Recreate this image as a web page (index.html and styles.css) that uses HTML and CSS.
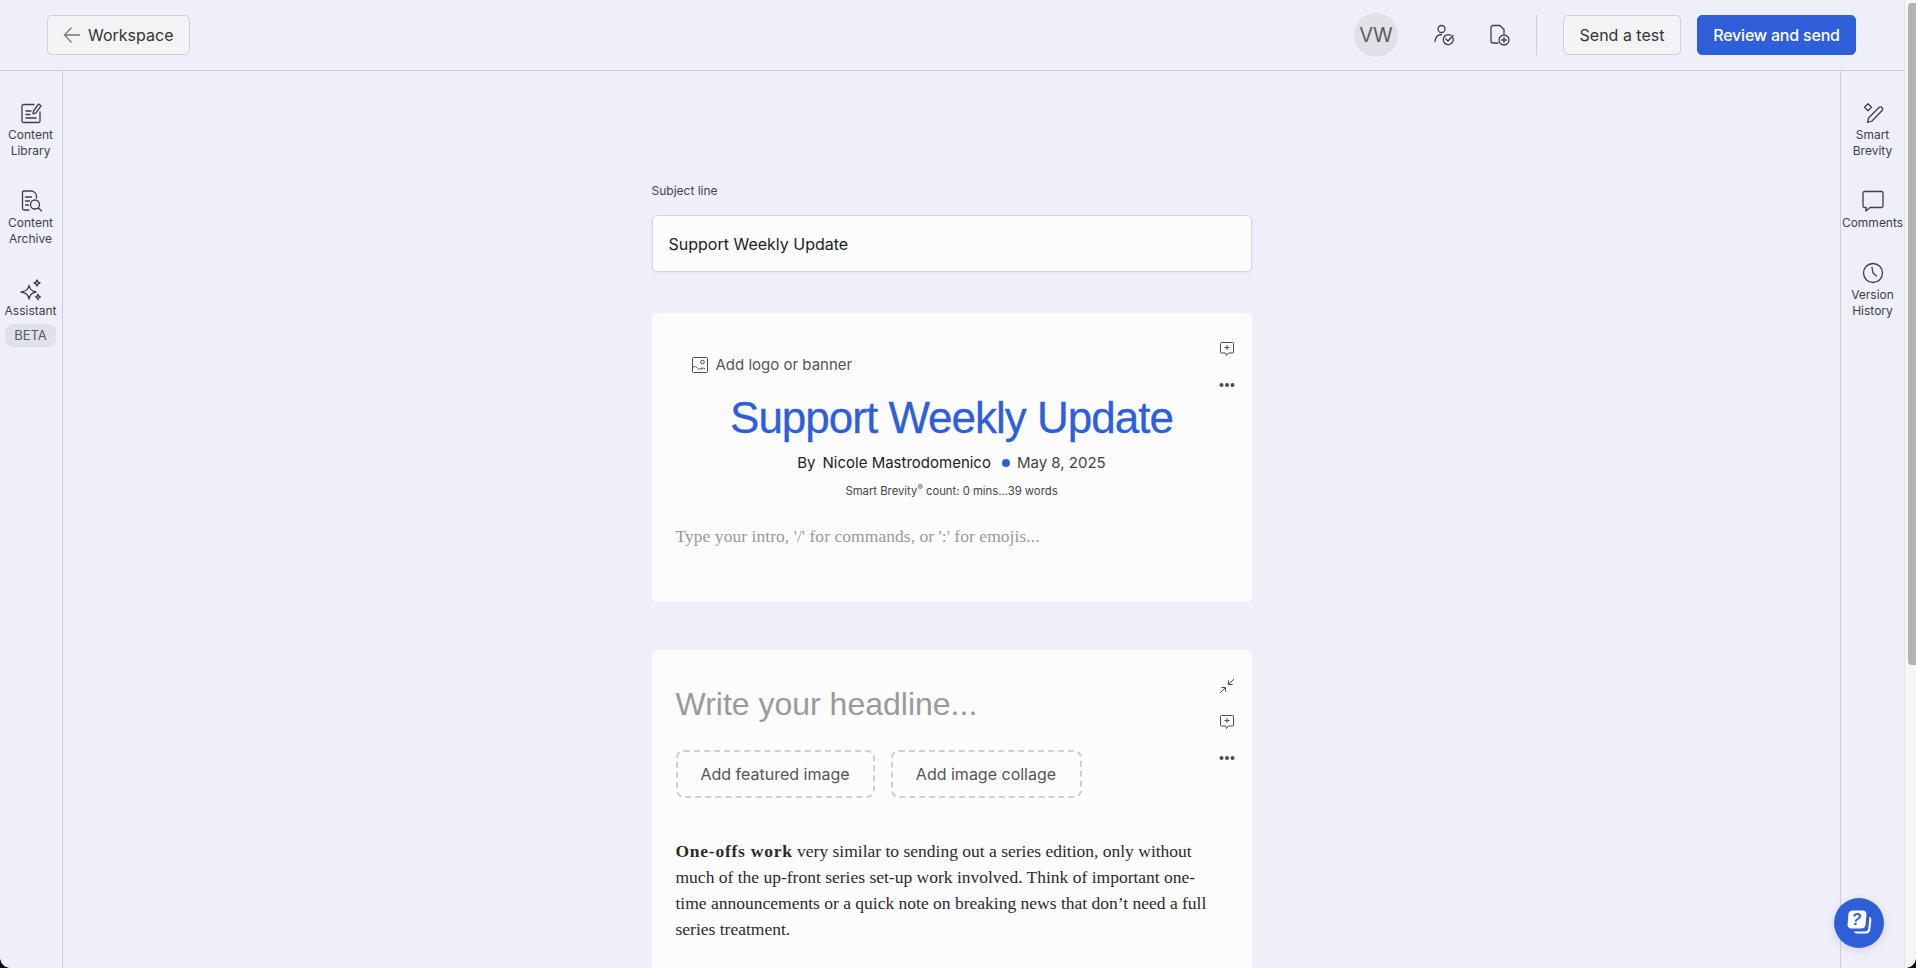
FILE: index.html
```html
<!DOCTYPE html>
<html lang="en">
<head>
    <meta charset="UTF-8">
    <meta name="viewport" content="width=device-width, initial-scale=1.0">
    <title>Support Weekly Update</title>
    <link rel="stylesheet" href="styles.css">
</head>
<body>
    <div class="window">
        <div class="page">
            <header class="topbar">
                <button class="btn btn-back">
                    <svg class="back-arrow" width="18" height="18" viewBox="0 0 18 18"><path d="M17 9H1.500M8.500 1.500 1.500 9l7 7.500"/></svg>
                    Workspace
                </button>
                <div class="topbar-right">
                    <div class="avatar">VW</div>
                    <button class="icon-btn icon-approvals" aria-label="Approvals">
                        <svg class="icon" width="24" height="24" viewBox="0 0 24 24"><circle cx="9.500" cy="6" r="3.500"/><path d="M3 18.500c.5-4 3-7 6.500-7"/><path d="M20.800 14.500a5 5 0 1 1-2-2.200"/><path d="m13.800 16 2.200 2 5-5.500"/></svg>
                    </button>
                    <button class="icon-btn" aria-label="Add document">
                        <svg class="icon" width="24" height="24" viewBox="0 0 24 24"><path d="M11 20H6a2 2 0 0 1-2-2V4.500a2 2 0 0 1 2-2h7l4 4v4"/><circle cx="17" cy="17" r="5"/><path d="M17 14.500v5M14.500 17h5"/></svg>
                    </button>
                    <div class="divider"></div>
                    <button class="btn btn-test">Send a test</button>
                    <button class="btn btn-primary">Review and send</button>
                </div>
            </header>

            <div class="workspace">
                <nav class="rail rail-left">
                    <a class="rail-item">
                        <svg class="icon" width="24" height="24" viewBox="0 0 24 24"><path d="M15 3.500H4.500A1.500 1.500 0 0 0 3 5v15a1.500 1.500 0 0 0 1.500 1.500h15A1.500 1.500 0 0 0 21 20v-9"/><path d="M7 10h5M7 13.500h4M7 17h10"/><path d="m14.500 10 5-7 2.500 1.800-5 7-3 1z"/></svg>
                        <span>Content<br>Library</span>
                    </a>
                    <a class="rail-item">
                        <svg class="icon" width="24" height="24" viewBox="0 0 24 24"><path d="M10 21H5a1.500 1.500 0 0 1-1.500-1.500V3.500A1.500 1.500 0 0 1 5 2h7c3 0 5.500 2.500 5.500 5.500V9"/><path d="M6.500 8h6M6.500 12h4M6.500 16h3"/><circle cx="16" cy="15.500" r="4.500"/><path d="m19.500 19 3 3"/></svg>
                        <span>Content<br>Archive</span>
                    </a>
                    <a class="rail-item item-assistant">
                        <svg class="icon" width="24" height="24" viewBox="0 0 24 24"><path d="M10 6.500c1 4 2.500 5.500 7 6.500-4.500 1-6 2.500-7 7-1-4.500-2.500-6-8-7 5.500-1 7-2.500 8-6.500z"/><path d="M18 1c.4 2 1 2.600 3 3-2 .4-2.600 1-3 3-.4-2-1-2.600-3-3 2-.4 2.600-1 3-3zM19 15.500c.3 1.500.8 2 2.500 2.500-1.700.5-2.200 1-2.500 2.500-.3-1.500-.8-2-2.500-2.500 1.700-.5 2.200-1 2.500-2.500z"/></svg>
                        <span>Assistant</span>
                        <span class="beta">BETA</span>
                    </a>
                </nav>

                <main class="editor">
                    <label class="subject-label">Subject line</label>
                    <div class="subject-input">Support Weekly Update</div>

                    <section class="card card-header">
                        <div class="card-tools">
                            <svg class="tool" width="16" height="16" viewBox="0 0 16 16"><path d="M2.500 1.500h11a1 1 0 0 1 1 1v8.500a1 1 0 0 1-1 1H9.500L7.500 14.500 6.500 12h-4a1 1 0 0 1-1-1V2.500a1 1 0 0 1 1-1z"/><path d="M8 4v5M5.500 6.500h5"/></svg>
                            <svg class="dots" width="16" height="16" viewBox="0 0 16 16"><circle cx="2.500" cy="8" r="2"/><circle cx="8" cy="8" r="2"/><circle cx="13.500" cy="8" r="2"/></svg>
                        </div>
                        <div class="add-logo">
                            <svg class="tool" width="18" height="18" viewBox="0 0 18 18"><rect x="1.500" y="1.500" width="15" height="15" rx="1"/><circle cx="11.500" cy="6" r="1.800"/><path d="M1.500 12c2-2 3.500-2 5 0s3 1 4.500-.5M10 13.500l2.500-1.500 1.500 1"/></svg>
                            Add logo or banner
                        </div>
                        <h1 class="title">Support Weekly Update</h1>
                        <div class="byline">
                            <span class="by">By</span>
                            <span class="author">Nicole Mastrodomenico</span>
                            <span class="dot"></span>
                            <span class="date">May 8, 2025</span>
                        </div>
                        <div class="count">Smart Brevity<sup>®</sup> count: 0 mins...39 words</div>
                        <div class="intro">Type your intro, '/' for commands, or ':' for emojis...</div>
                    </section>

                    <section class="card card-story">
                        <div class="card-tools">
                            <svg class="tool" width="16" height="16" viewBox="0 0 16 16"><path d="M9.500 6.500 15 1M9.500 2.500v4h4M6.500 9.500 1 15M2.500 9.500h4v4"/></svg>
                            <svg class="tool" width="16" height="16" viewBox="0 0 16 16"><path d="M2.500 1.500h11a1 1 0 0 1 1 1v8.500a1 1 0 0 1-1 1H9.500L7.500 14.500 6.500 12h-4a1 1 0 0 1-1-1V2.500a1 1 0 0 1 1-1z"/><path d="M8 4v5M5.500 6.500h5"/></svg>
                            <svg class="dots" width="16" height="16" viewBox="0 0 16 16"><circle cx="2.500" cy="8" r="2"/><circle cx="8" cy="8" r="2"/><circle cx="13.500" cy="8" r="2"/></svg>
                        </div>
                        <div class="headline">Write your headline...</div>
                        <div class="image-btns">
                            <button class="dashed dashed-featured">Add featured image</button>
                            <button class="dashed dashed-collage">Add image collage</button>
                        </div>
                        <p class="story"><strong>One-offs work</strong> very similar to sending out a series edition, only without<br>much of the up-front series set-up work involved. Think of important one-<br>time announcements or a quick note on breaking news that don’t need a full<br>series treatment.</p>
                    </section>
                </main>

                <nav class="rail rail-right">
                    <a class="rail-item">
                        <svg class="icon" width="24" height="24" viewBox="0 0 24 24"><path d="M6.500 21.500 7.500 17 18 6.500a2.200 2.200 0 0 1 3.200 3L11 20z"/><path d="M7 2.800 10.500 6.300 7 9.800 3.500 6.300z"/></svg>
                        <span>Smart<br>Brevity</span>
                    </a>
                    <a class="rail-item">
                        <svg class="icon" width="24" height="24" viewBox="0 0 24 24"><path d="M3.500 2.500h17a1.500 1.500 0 0 1 1.500 1.500v13a1.500 1.500 0 0 1-1.500 1.500H9L5 22v-3.500H3.500A1.500 1.500 0 0 1 2 17V4a1.500 1.500 0 0 1 1.500-1.500z"/></svg>
                        <span>Comments</span>
                    </a>
                    <a class="rail-item">
                        <svg class="icon" width="24" height="24" viewBox="0 0 24 24"><circle cx="12" cy="12" r="9.500"/><path d="M11 6.500 12 12l3.500 3"/></svg>
                        <span>Version<br>History</span>
                    </a>
                </nav>
            </div>
        </div>

        <div class="scrollbar"><div class="thumb"></div></div>

        <button class="help" aria-label="Help">
            <svg width="30" height="30" viewBox="0 0 30 30">
                <path class="help-back" d="M25.500 8.500c1.500 1 2 2 1.800 4l-1 9c-.3 2.500-2 4-4.500 4h-9c-1.500 0-2.500-.8-3-2h11c2 0 3.300-1 3.600-3z"/>
                <rect class="help-front" x="3.500" y="2.500" width="18" height="18" rx="4" transform="skewX(-5) translate(1.500 0)"/>
                <text class="help-mark" x="12.500" y="17" text-anchor="middle">?</text>
            </svg>
        </button>

        <div class="corner corner-left"></div>
        <div class="corner corner-right"></div>
    </div>
</body>
</html>
```

FILE: styles.css
```css
* {
    box-sizing: border-box;
}
html, body {
    margin: 0;
    height: 100%;
    overflow: hidden;
}
body {
    font-family: 'Inter', 'Liberation Sans', sans-serif;
    background-color: #eeeff8;
    color: #333;
}
.window {
    position: relative;
    display: flex;
    height: 968px;
    overflow: hidden;
}
.page {
    flex: 1;
    min-width: 0;
    display: flex;
    flex-direction: column;
}
button {
    font-family: inherit;
}
.topbar {
    height: 71px;
    flex-shrink: 0;
    display: flex;
    align-items: center;
    justify-content: space-between;
    padding: 0 48px 1px 47px;
    border-bottom: 1px solid #cdced9;
}
.topbar-right {
    display: flex;
    align-items: center;
}
.btn {
    height: 40px;
    display: flex;
    align-items: center;
    border-radius: 5px;
    font-size: 16px;
    color: #333;
    background-color: #f3f3f6;
    border: 1px solid #cfcfd6;
    cursor: pointer;
}
.btn-back {
    width: 143px;
    padding: 0 0 0 15px;
    gap: 7px;
}
.back-arrow {
    fill: none;
    stroke: #777;
    stroke-width: 1.3;
}
.avatar {
    width: 44px;
    height: 44px;
    border-radius: 50%;
    background-color: #e1e2e8;
    color: #5a5c63;
    font-size: 20px;
    display: flex;
    align-items: center;
    justify-content: center;
    margin-right: 34px;
}
.icon-btn {
    width: 24px;
    height: 24px;
    padding: 0;
    background: none;
    border: none;
    margin-right: 32px;
}
.icon-approvals {
    margin-right: 31px;
}
.icon {
    fill: none;
    stroke: #3c3f46;
    stroke-width: 1.3;
    stroke-linecap: round;
    stroke-linejoin: round;
    display: block;
}
.divider {
    width: 1px;
    height: 40px;
    background-color: #cdced9;
    margin: 0 26px 0 -7px;
}
.btn-test {
    width: 118px;
    justify-content: center;
    margin-right: 16px;
}
.btn-primary {
    width: 159px;
    justify-content: center;
    background-color: #2f5fd8;
    border-color: #2f5fd8;
    color: #fff;
    letter-spacing: -0.2px;
    font-weight: 500;
}
.workspace {
    flex: 1;
    min-height: 0;
    display: flex;
}
.rail {
    flex-shrink: 0;
    display: flex;
    flex-direction: column;
    align-items: center;
    gap: 30px;
    padding-top: 30px;
}
.rail-left {
    width: 63px;
    padding-right: 1px;
    border-right: 1px solid #cdced9;
}
.rail-right {
    width: 64px;
    border-left: 1px solid #cdced9;
}
.rail-item {
    display: flex;
    flex-direction: column;
    align-items: center;
    font-size: 12px;
    line-height: 16px;
    text-align: center;
    color: #3c3f46;
    gap: 2px;
}
.item-assistant {
    margin-top: 2px;
    gap: 0;
}
.beta {
    width: 51px;
    height: 23px;
    line-height: 23px;
    margin-top: 5px;
    border-radius: 8px;
    background-color: #e1e2e8;
    font-size: 13px;
    color: #5a5c63;
}
.editor {
    flex: 1;
    min-width: 0;
    display: flex;
    flex-direction: column;
    align-items: center;
    padding-top: 111px;
}
.subject-label {
    width: 600px;
    font-size: 12px;
    line-height: 18px;
    color: #444;
    margin-bottom: 15px;
}
.subject-input {
    width: 600px;
    height: 57px;
    flex-shrink: 0;
    display: flex;
    align-items: center;
    padding-left: 16px;
    font-size: 16px;
    color: #222;
    background-color: #fcfcfd;
    border: 1px solid #d3d4dc;
    border-radius: 5px;
    box-shadow: 0 1px 3px rgba(0, 0, 0, 0.05);
}
.card {
    position: relative;
    width: 600px;
    flex-shrink: 0;
    background-color: #fcfcfd;
    border-radius: 5px;
}
.card-header {
    height: 289px;
    margin-top: 41px;
    padding: 40px 24px 0;
}
.card-story {
    height: 500px;
    margin-top: 48px;
    padding: 34px 24px 0;
}
.card-tools {
    position: absolute;
    top: 28px;
    right: 17px;
    display: flex;
    flex-direction: column;
    gap: 20px;
}
.tool {
    fill: none;
    stroke: #4a4c52;
    stroke-width: 1;
    display: block;
}
.dots {
    fill: #4a4c52;
    display: block;
}
.add-logo {
    display: flex;
    align-items: center;
    gap: 7px;
    margin-left: 15px;
    font-size: 15px;
    line-height: 24px;
    color: #555;
}
.title {
    margin: 13px 0 0;
    font-family: 'Liberation Sans', Arial, sans-serif;
    font-weight: 400;
    font-size: 44px;
    line-height: 56px;
    letter-spacing: -1px;
    -webkit-text-stroke: 0.3px #2f5fd8;
    text-align: center;
    color: #2f5fd8;
}
.byline {
    display: flex;
    justify-content: center;
    align-items: center;
    margin-top: 5px;
    font-size: 15px;
    line-height: 24px;
    color: #222;
}
.by {
    margin-right: 7px;
}
.dot {
    width: 8px;
    height: 8px;
    border-radius: 50%;
    background-color: #2f5fd8;
    margin: 0 7px 0 11px;
}
.date {
    color: #444;
}
.count {
    margin-top: 7px;
    font-size: 11.300px;
    line-height: 18px;
    text-align: center;
    color: #444;
}
.count sup {
    font-size: 8px;
    line-height: 0;
}
.intro {
    margin-top: 23px;
    font-family: 'Liberation Serif', Georgia, serif;
    font-size: 17.500px;
    letter-spacing: 0.05px;
    line-height: 26px;
    color: #999;
}
.headline {
    font-family: 'Liberation Sans', Arial, sans-serif;
    font-size: 32px;
    line-height: 40px;
    color: #9a9a9c;
}
.image-btns {
    display: flex;
    gap: 16px;
    margin-top: 26px;
}
.dashed {
    height: 48px;
    background: none;
    border: 2px dashed #cfcfd3;
    border-radius: 8px;
    font-size: 16px;
    color: #555;
    padding: 0;
}
.dashed-featured {
    width: 199px;
}
.dashed-collage {
    width: 191px;
}
.story {
    margin: 40px 0 0;
    font-family: 'Liberation Serif', Georgia, serif;
    font-size: 17.500px;
    line-height: 26px;
    color: #2b2b2b;
    white-space: nowrap;
}
.story strong {
    letter-spacing: 0.75px;
}
.scrollbar {
    width: 12px;
    flex-shrink: 0;
    background-color: #f6f6f8;
    border-left: 1px solid #e4e4ea;
    padding: 3px 0 0 3px;
}
.thumb {
    height: 662px;
    border-radius: 4px 0 0 4px;
    background-color: #b3b3b6;
}
.help {
    position: absolute;
    left: 1834px;
    top: 898px;
    width: 50px;
    height: 50px;
    padding: 0;
    border: none;
    border-radius: 50%;
    background-color: #2f5fd8;
    box-shadow: 0 2px 10px rgba(0, 0, 0, 0.12);
    display: flex;
    align-items: center;
    justify-content: center;
}
.help-back,
.help-front {
    fill: #fff;
}
.help-mark {
    font-family: 'Liberation Sans', sans-serif;
    font-size: 16px;
    font-weight: 700;
    font-style: italic;
    fill: #2f5fd8;
}
.corner {
    position: absolute;
    bottom: 0;
    width: 10px;
    height: 10px;
}
.corner-left {
    left: 0;
    background: radial-gradient(circle at 100% 0, transparent 9.500px, #111 10px);
}
.corner-right {
    right: 0;
    background: radial-gradient(circle at 0 0, transparent 9.500px, #111 10px);
}
```
